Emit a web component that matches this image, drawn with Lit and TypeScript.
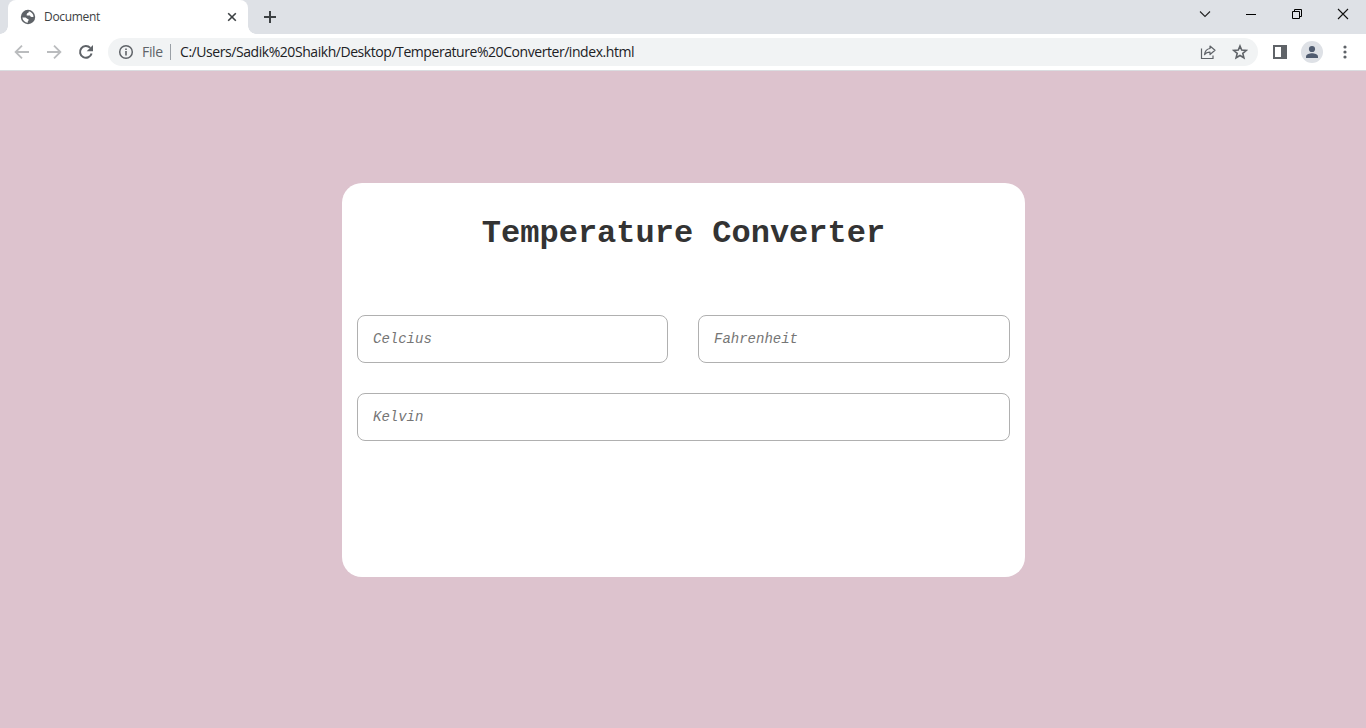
import { LitElement, html, css, svg } from "lit";
import { customElement, property } from "lit/decorators.js";

const icons: Record<string, any> = {
  globe: svg`<circle cx="8" cy="8" r="7.200" fill="#5f6368"/><path d="M2.400 8.600h2.400c1.200 0 1.600.7 2.400 1.100.9.4 1.500.5 1.500 1.400 0 .7-.9.8-.9 1.600v1C4.900 13.500 2.600 11.500 2.400 8.600zM8.800 2.300c.2.900-.2 1.500-1 1.700-.9.200-.8.800-1.100 1.500-.2.600-.1 1.100.7 1.100h2.200c.5 0 .7.600.9 1 .4.600 1.400.5 3.100.1-.2-2.700-2.200-4.900-4.800-5.400z" fill="#fff"/>`,
  tabClose: svg`<path d="M4.200 4.200l7.600 7.600M11.800 4.200l-7.600 7.600" stroke="#3c4043" stroke-width="1.600"/>`,
  plus: svg`<path d="M8 2v12M2 8h12" stroke="#3c4043" stroke-width="2"/>`,
  back: svg`<path d="M15 8H2M8 1.600L1.600 8 8 14.400" fill="none" stroke="#babcbe" stroke-width="1.800"/>`,
  forward: svg`<path d="M1 8h13M8 1.600L14.400 8 8 14.400" fill="none" stroke="#babcbe" stroke-width="1.800"/>`,
  reload: svg`<path d="M13.600 9.500A5.900 5.900 0 1 1 12.300 3.900" fill="none" stroke="#5f6368" stroke-width="2"/><path d="M15 1v6.300H8.700z" fill="#5f6368"/>`,
  info: svg`<circle cx="8" cy="8" r="6.300" fill="none" stroke="#5f6368" stroke-width="1.500"/><path d="M8 7v4.500M8 4.400v1.700" stroke="#5f6368" stroke-width="1.600"/>`,
  share: svg`<path d="M1.500 4.500v10h11.500v-3" fill="none" stroke="#5f6368" stroke-width="1.200"/><path d="M10 2l5 4.300-5 4.200V8.100c-2.600 0-4.300.8-5.500 2.600.4-3.300 2.400-5.700 5.500-6.200z" fill="none" stroke="#5f6368" stroke-width="1.200" stroke-linejoin="round"/>`,
  star: svg`<path d="M8 2l1.700 4.100 4.500.4-3.400 2.900 1.100 4.400L8 11.500l-3.900 2.300 1.100-4.400-3.400-2.900 4.500-.4z" fill="none" stroke="#5f6368" stroke-width="1.600"/>`,
  panel: svg`<path d="M1 1h14v14H1zM3 3v10h6V3z" fill="#5f6368" fill-rule="evenodd"/>`,
  person: svg`<circle cx="8" cy="5" r="3.100" fill="#505c70"/><path d="M2 14v-1.600C2 10.200 5.800 9.200 8 9.200s6 1 6 3.200V14z" fill="#505c70"/>`,
  dots: svg`<circle cx="8" cy="3" r="1.600" fill="#5f6368"/><circle cx="8" cy="8" r="1.600" fill="#5f6368"/><circle cx="8" cy="13" r="1.600" fill="#5f6368"/>`,
  chevron: svg`<path d="M3 5.500l5 5 5-5" fill="none" stroke="#222" stroke-width="1.100"/>`,
  minimize: svg`<path d="M3 8.500h10" stroke="#000"/>`,
  restore: svg`<path d="M3.500 5.500h7v7h-7zM5.500 5.500v-2h7v7h-2" fill="none" stroke="#000"/>`,
  close: svg`<path d="M3 3l10 10M13 3L3 13" stroke="#111" stroke-width="1.100"/>`,
};

@customElement("ui-icon")
class UiIcon extends LitElement {
  @property() name = "";
  static styles = css`
    :host { display: block; width: 16px; height: 16px; flex: none; }
    svg { display: block; }
  `;
  render() {
    return html`<svg width="16" height="16" viewBox="0 0 16 16">${icons[this.name]}</svg>`;
  }
}

@customElement("browser-chrome")
class BrowserChrome extends LitElement {
  static styles = css`
    :host { display: block; flex: none; font-family: "Open Sans", "Noto Sans", sans-serif; }
    .strip { height: 34px; background: #dee1e6; display: flex; }
    .tab { position: relative; box-sizing: border-box; width: 240px; height: 34px; margin-left: 8px; padding: 0 8px 0 12px; background: #fff; border-radius: 8px 8px 0 0; display: flex; align-items: center; }
    .tab::before, .tab::after { content: ""; position: absolute; bottom: 0; width: 8px; height: 8px; }
    .tab::before { left: -8px; background: radial-gradient(circle at 0 0, transparent 7.500px, #fff 8px); }
    .tab::after { right: -8px; background: radial-gradient(circle at 100% 0, transparent 7.500px, #fff 8px); }
    .title { flex: 1; margin-left: 8px; padding-bottom: 1px; font-size: 12px; letter-spacing: -0.330px; color: #3c4043; white-space: nowrap; }
    .new { margin: 9px 0 0 14px; }
    .controls { margin-left: auto; display: flex; gap: 30px; padding: 6px 15px 0 0; }
    .toolbar { box-sizing: border-box; height: 37px; background: #fff; border-bottom: 1px solid #dadce0; display: flex; align-items: center; padding: 0 13px 0 14px; }
    .nav { display: flex; gap: 16px; margin-right: 14px; }
    .address { box-sizing: border-box; flex: none; width: 1150px; height: 28px; border-radius: 14px; background: #f1f3f4; display: flex; align-items: center; padding: 0 10px; font-size: 14px; white-space: nowrap; }
    .scheme { width: 28px; margin-left: 8px; padding-bottom: 1px; color: #5f6368; letter-spacing: -0.350px; }
    .rule { width: 1px; height: 16px; background: #9aa0a6; margin-right: 9px; }
    .url { flex: 1; padding-bottom: 1px; color: #202124; letter-spacing: -0.440px; }
    .share { margin-right: 16px; }
    .side { margin-left: 14px; display: flex; align-items: center; }
    .avatar { width: 22px; height: 22px; border-radius: 50%; background: #dee1e6; display: flex; align-items: center; justify-content: center; margin: 0 14px 0 13px; }
  `;
  render() {
    return html`
      <div class="strip">
        <div class="tab">
          <ui-icon name="globe"></ui-icon>
          <span class="title">Document</span>
          <ui-icon name="tabClose"></ui-icon>
        </div>
        <ui-icon class="new" name="plus"></ui-icon>
        <div class="controls">
          <ui-icon name="chevron"></ui-icon>
          <ui-icon name="minimize"></ui-icon>
          <ui-icon name="restore"></ui-icon>
          <ui-icon name="close"></ui-icon>
        </div>
      </div>
      <div class="toolbar">
        <div class="nav">
          <ui-icon name="back"></ui-icon>
          <ui-icon name="forward"></ui-icon>
          <ui-icon name="reload"></ui-icon>
        </div>
        <div class="address">
          <ui-icon name="info"></ui-icon>
          <span class="scheme">File</span>
          <span class="rule"></span>
          <span class="url">C:/Users/Sadik%20Shaikh/Desktop/Temperature%20Converter/index.html</span>
          <ui-icon class="share" name="share"></ui-icon>
          <ui-icon name="star"></ui-icon>
        </div>
        <div class="side">
          <ui-icon name="panel"></ui-icon>
          <div class="avatar"><ui-icon name="person"></ui-icon></div>
          <ui-icon name="dots"></ui-icon>
        </div>
      </div>
    `;
  }
}

@customElement("temperature-converter")
class TemperatureConverter extends LitElement {
  static styles = css`
    :host { box-sizing: border-box; display: block; width: 683px; height: 394px; background: #fff; border-radius: 20px; padding: 33px 15px 0; font-family: "Courier New", "Liberation Mono", monospace; }
    .heading { margin: 0 0 63px; font-size: 32px; line-height: 36px; font-weight: 700; color: #333; text-align: center; }
    .fields { display: grid; grid-template-columns: 311px 312px; gap: 30px; }
    .field { box-sizing: border-box; width: 100%; min-width: 0; height: 48px; padding: 0 15px; border: 1px solid #b0b0b0; border-radius: 8px; outline: none; background: #fff; font-family: inherit; font-size: 14px; font-style: italic; }
    .field::placeholder { color: #757575; }
    .wide { grid-column: span 2; }
  `;
  render() {
    return html`
      <h1 class="heading">Temperature Converter</h1>
      <div class="fields">
        <input class="field" placeholder="Celcius" />
        <input class="field" placeholder="Fahrenheit" />
        <input class="field wide" placeholder="Kelvin" />
      </div>
    `;
  }
}

@customElement("app-root")
class AppRoot extends LitElement {
  static styles = css`
    :host { display: flex; flex-direction: column; height: 100vh; overflow: hidden; background: #ddc3ce; }
    .page { flex: 1; display: flex; justify-content: center; align-items: flex-start; padding: 112px 0 0 1px; }
  `;
  render() {
    return html`
      <browser-chrome></browser-chrome>
      <main class="page"><temperature-converter></temperature-converter></main>
    `;
  }
}
